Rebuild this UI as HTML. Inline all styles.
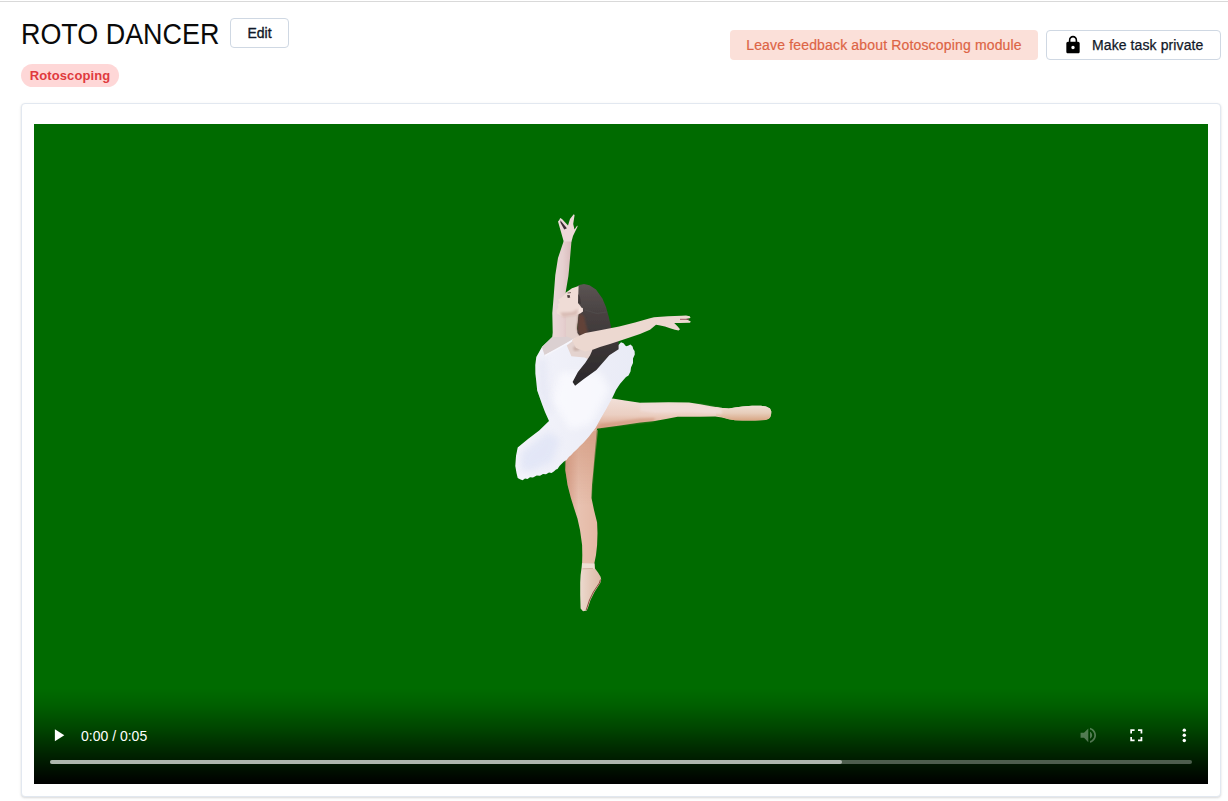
<!DOCTYPE html>
<html>
<head>
<meta charset="utf-8">
<title>ROTO DANCER</title>
<style>
*{box-sizing:border-box;margin:0;padding:0}
html,body{width:1228px;height:801px;overflow:hidden;background:#fff;font-family:"Liberation Sans",sans-serif;}
body{position:relative}
.topline{position:absolute;left:0;top:1px;width:1228px;height:1px;background:#d9d9d9}
.title{position:absolute;left:21px;top:14.5px;height:38px;line-height:38px;font-size:30px;color:#0a0a0a;white-space:nowrap;transform:scaleX(.897);transform-origin:0 0}
.btn{position:absolute;height:30px;border:1px solid #cfd8e3;border-radius:4px;background:#fff;color:#111827;font-size:14px;line-height:28px;text-align:center;white-space:nowrap}
.edit{left:230px;top:18px;width:59px;font-size:14px;-webkit-text-stroke:.35px #111827}
.badge{position:absolute;left:21px;top:64px;width:98px;height:23px;border-radius:12px;background:#fed7d7;color:#e03a3e;font-weight:bold;font-size:13px;line-height:24.700px;text-align:center;letter-spacing:0.1px}
.feedback{position:absolute;left:730px;top:30px;width:308px;height:30px;border-radius:4px;background:#fbe0d9;color:#dd6445;font-size:14px;letter-spacing:.16px;-webkit-text-stroke:.2px #dd6445;line-height:30px;text-align:center;white-space:nowrap}
.private{left:1046px;top:30px;width:175px;font-size:14px;letter-spacing:.1px;-webkit-text-stroke:.25px #111827}
.private svg{position:absolute;left:16px;top:4px;width:20px;height:20px}
.private span{position:absolute;left:45px;top:0;line-height:28px}
.card{position:absolute;left:21px;top:103px;width:1200px;height:694px;border:1px solid #e2e8f0;border-radius:4px;background:#fff;box-shadow:0 1px 3px rgba(0,0,0,.10),0 1px 2px rgba(0,0,0,.06)}
.video{position:absolute;left:34px;top:124px;width:1174px;height:660px;background:#006b00;overflow:hidden}
.grad{position:absolute;left:0;right:0;bottom:0;height:96px;background:linear-gradient(to bottom,rgba(0,0,0,0) 0%,rgba(0,0,0,.11) 18%,rgba(0,0,0,.36) 43%,rgba(0,0,0,.66) 68%,rgba(0,0,0,.89) 89%,rgba(0,0,0,1) 100%)}
.time{position:absolute;left:47px;top:603px;font-size:14px;line-height:18px;color:#fff;white-space:nowrap}
.bar{position:absolute;left:16px;top:636px;width:1142px;height:4px;border-radius:2px;background:rgba(255,255,255,.3)}
.bar i{position:absolute;left:0;top:0;height:4px;width:792px;border-radius:2px;background:rgba(255,255,255,.55)}
.ic{position:absolute;width:20.6px;height:20.6px;fill:#fff}
</style>
</head>
<body>
<div class="topline"></div>
<div class="title">ROTO DANCER</div>
<div class="btn edit">Edit</div>
<div class="badge">Rotoscoping</div>
<div class="feedback">Leave feedback about Rotoscoping module</div>
<div class="btn private">
<svg viewBox="0 0 24 24"><path fill="#000" d="M18 8h-1V6c0-2.76-2.24-5-5-5S7 3.240 7 6v2H6c-1.100 0-2 .9-2 2v10c0 1.100.9 2 2 2h12c1.100 0 2-.9 2-2V10c0-1.100-.9-2-2-2zm-6 9c-1.100 0-2-.9-2-2s.9-2 2-2 2 .9 2 2-.9 2-2 2zm3.100-9H8.900V6c0-1.710 1.390-3.100 3.100-3.100 1.710 0 3.100 1.390 3.100 3.100v2z"/></svg>
<span>Make task private</span>
</div>
<div class="card"></div>
<div class="video">
<!--DANCER-->
<svg class="dancer" viewBox="34 124 1174 660" width="1174" height="660" style="position:absolute;left:0;top:0">
<defs>
<filter id="bl" x="-5%" y="-5%" width="110%" height="110%"><feGaussianBlur stdDeviation="0.6"/></filter>
<filter id="bl3" x="-40%" y="-40%" width="180%" height="180%"><feGaussianBlur stdDeviation="3.5"/></filter>
<filter id="bl2" x="-20%" y="-20%" width="140%" height="140%"><feGaussianBlur stdDeviation="1.2"/></filter>
<linearGradient id="legx" x1="0" y1="0" x2="0" y2="1"><stop offset="0" stop-color="#f1dfd8"/><stop offset=".5" stop-color="#ebcfc2"/><stop offset="1" stop-color="#d7997c"/></linearGradient>
<linearGradient id="legs" x1="0" y1="0" x2="1" y2="0"><stop offset="0" stop-color="#d39a84"/><stop offset=".4" stop-color="#e8c2b1"/><stop offset="1" stop-color="#e4b8a4"/></linearGradient>
<linearGradient id="tutu" x1="0" y1="0" x2="1" y2="0"><stop offset="0" stop-color="#f4f4fb"/><stop offset=".5" stop-color="#eeeff8"/><stop offset="1" stop-color="#e9ebf6"/></linearGradient>
<linearGradient id="hair" x1="0" y1="0" x2="0" y2="1"><stop offset="0" stop-color="#5c5554"/><stop offset=".3" stop-color="#484141"/><stop offset=".6" stop-color="#3b3536"/><stop offset="1" stop-color="#2a282b"/></linearGradient>
<linearGradient id="arm1" x1="0" y1="0" x2="1" y2="0"><stop offset="0" stop-color="#e9d8d8"/><stop offset=".55" stop-color="#e6d0d0"/><stop offset="1" stop-color="#d9bcbc"/></linearGradient>
<linearGradient id="thsh" gradientUnits="userSpaceOnUse" x1="0" y1="440" x2="0" y2="505"><stop offset="0" stop-color="#d0957a" stop-opacity=".6"/><stop offset="1" stop-color="#d0957a" stop-opacity="0"/></linearGradient>
<linearGradient id="shoe1" x1="0" y1="0" x2="1" y2="0"><stop offset="0" stop-color="#ecd9ce"/><stop offset=".5" stop-color="#e4c9b9"/><stop offset="1" stop-color="#dcbba8"/></linearGradient>
<linearGradient id="shoe2" x1="0" y1="0" x2="0" y2="1"><stop offset="0" stop-color="#efe0d4"/><stop offset=".5" stop-color="#e7cdba"/><stop offset="1" stop-color="#d8a684"/></linearGradient>
<clipPath id="tclip"><path d="M552.5 336.8 L541.9 347 L536.3 357.100 L535.3 365 L535.4 373.8 L536.3 381.4 L537.2 390.4 L541.8 403.4 L545 412 L549 421 L539.2 430.4 L528 439 L517.7 447.5 L516 456 L515.3 465.9 L516.5 473 L517.7 478.100 L520 479.2 L522.6 480.3 L525 478.4 L527.5 479 L530 477.2 L533 477.6 L536.7 475.5 L540 475.8 L543 474 L546 474.3 L549 472.6 L551.500 473 L553.8 471.6 L556 469.6 L557.500 469 L559.500 466 L561.2 464.2 L564 461.6 L566.500 460 L569 456.8 L571 455.2 L573.4 452.4 L577 449.3 L580 446 L583 443.3 L585.7 440.2 L589 436.4 L592 432.5 L595.5 427.9 L601 418 L606.5 408.4 L612.6 397.3 L616 390 L620.100 383.8 L626 377 L628.500 375.500 L630.5 371.6 L631 367.500 L633 363 L633 358.500 L634.8 354.5 L634.6 351 L633.2 349 L632.6 346.4 L630.5 344.5 L628 345.8 L626 346.3 L623.500 343.2 L621 342.2 L619 344.500 L617 346 L600 350 L585.9 356.3 L577 337 L565 337 Z"/></clipPath>
</defs>
<g filter="url(#bl)">
<!-- standing leg -->
<path fill="url(#legs)" d="M572 438 L566 455 L565.3 470 L567.5 485 L570.9 498.100 L574 508 L577.5 518.7 L580 530 L582.100 544.9 L582.3 555 L582.100 563.6 L594.3 563.6 L596 555 L597.100 544.9 L597.5 533 L597.100 522.4 L594 510 L591.5 498.100 L592 485 L593.4 470 L595 450 L596.7 430.4 L598 424 Z"/>
<!-- pointe shoe -->
<path fill="url(#shoe1)" d="M582 563 L581.6 567.4 L580.6 575 L580.2 582.4 L580.2 595 L580.6 608.6 L583 611.2 L586.8 610.6 L588.2 607 L590.5 600 L594.5 592 L598 586.500 L600.3 583 L601.2 579.500 L600.6 576.7 L598 572.500 L595 568.500 L594.3 563 Z"/>
<path fill="none" stroke="#8a4c3c" stroke-width="1" d="M600.5 579.500 L599.4 583 L597 586.500 L593.4 592 L589.5 600 L587.2 607 L586.2 610"/>
<path fill="none" stroke="#eedfd3" stroke-width="5" d="M582 566.2 L594.5 566.2"/>
<path fill="none" stroke="#b98a78" stroke-width=".7" opacity=".7" d="M582.500 568.8 L593 568.4"/>
<!-- extended leg -->
<path fill="url(#legx)" d="M590 431 L600 402 L605 400 L612.6 398.6 L625 400.5 L640 402.8 L655 402.6 L668.5 402.2 L689 402.6 L700 404.2 L710.7 406.2 L720 407.8 L728.9 408.5 L735 407.6 L742.6 406.4 L752 405.7 L760.9 405.7 L766 406.5 L770 408.5 L771.3 411.5 L771.100 414.2 L770.3 417 L768.8 418.8 L765.4 419.9 L755 420.4 L742.6 420.5 L735 420.2 L728.9 419.3 L722 417.4 L715.2 416.4 L700 416.8 L677.6 416.8 L666 419 L654.8 421 L640 422.5 L620 425.500 L597.9 428.5 Z"/>
<path fill="url(#shoe2)" d="M716 407 L720 407.8 L728.9 408.5 L735 407.6 L742.6 406.4 L752 405.7 L760.9 405.7 L766 406.5 L770 408.5 L771.3 411.5 L771.100 414.2 L770.3 417 L768.8 418.8 L765.4 419.9 L755 420.4 L742.6 420.5 L735 420.2 L728.9 419.3 L722 417 L716 415.4 Z"/>
<path fill="#f1dfdb" opacity=".75" filter="url(#bl2)" d="M640 404 L700 405 L722 409 L722 414 L690 412.500 L655 413 L640 411 Z"/>
<path fill="#cf9478" opacity=".55" filter="url(#bl2)" d="M600 424 L640 418.500 L655 418 L654 421 L620 425 L598 428 Z"/>
<!-- thigh shade -->
<path fill="url(#thsh)" d="M564 440 L598 430 L594 470 L592 505 L572 505 L565 470 Z"/>
<!-- tutu + torso -->
<path fill="url(#tutu)" d="M552.5 336.8 L541.9 347 L536.3 357.100 L535.3 365 L535.4 373.8 L536.3 381.4 L537.2 390.4 L541.8 403.4 L545 412 L549 421 L539.2 430.4 L528 439 L517.7 447.5 L516 456 L515.3 465.9 L516.5 473 L517.7 478.100 L520 479.2 L522.6 480.3 L525 478.4 L527.5 479 L530 477.2 L533 477.6 L536.7 475.5 L540 475.8 L543 474 L546 474.3 L549 472.6 L551.500 473 L553.8 471.6 L556 469.6 L557.500 469 L559.500 466 L561.2 464.2 L564 461.6 L566.500 460 L569 456.8 L571 455.2 L573.4 452.4 L577 449.3 L580 446 L583 443.3 L585.7 440.2 L589 436.4 L592 432.5 L595.5 427.9 L601 418 L606.5 408.4 L612.6 397.3 L616 390 L620.100 383.8 L626 377 L628.500 375.500 L630.5 371.6 L631 367.500 L633 363 L633 358.500 L634.8 354.5 L634.6 351 L633.2 349 L632.6 346.4 L630.5 344.5 L628 345.8 L626 346.3 L623.500 343.2 L621 342.2 L619 344.500 L617 346 L600 350 L585.9 356.3 L577 337 L565 337 Z"/>
<g clip-path="url(#tclip)">
<path fill="#dde2f5" opacity=".7" filter="url(#bl3)" d="M521 452 L548 432 L560 440 L552 462 L530 472 L520 470 Z"/>
<path fill="#fcfcff" opacity=".7" filter="url(#bl3)" d="M560 372 L600 372 L610 390 L590 425 L570 430 L552 400 Z"/>
<path fill="#e0e3f3" opacity=".6" filter="url(#bl3)" d="M538 360 L546 358 L548 395 L552 412 L546 412 L538 390 Z"/>
</g>
<!-- chest (shaded) -->
<path fill="#dbd0d1" d="M553 333 L552.5 336.8 L541.9 347 L544.6 355.3 L556 349.5 L565 344.2 L576 337.7 L578 331 L562 330 Z"/>
<!-- strap highlight -->
<path fill="none" stroke="#f6f6fc" stroke-width="1.6" d="M545 355.6 L565.4 344.4 L576.5 338"/>
<!-- armpit skin -->
<path fill="#e4d3cf" d="M566.8 345.5 L571.4 356.2 L584.4 357.6 L588 359 L594 354.500 L597 348.5 L590 340 L576 338.5 Z"/>
<path fill="#c9b0a8" filter="url(#bl2)" d="M573 347 L580 346 L579 350.5 L574 351 Z"/>
<!-- neck -->
<path fill="#e3d1cc" d="M562.8 316 L561.5 324 L560.5 334 L572 338.500 L582 338.500 L579 333 L577.2 328.7 L579.3 313 Z"/>
<!-- hair -->
<path fill="url(#hair)" d="M576.5 288 L578.3 285.2 L584 284 L589.5 285.2 L596 289.5 L602.4 298.5 L606 307 L608.7 316.500 L611.3 328 L612.5 334 L618.6 340.6 L618.6 349.2 L609.3 355.3 L596.4 370 L583.5 379.3 L575.100 385.8 L572.6 382 L577.9 371.9 L585.3 362.7 L590 355.500 L592.3 350.3 L586 342 L580.500 337 L577.5 333 L577.2 328.7 L578.6 314 L577 304.6 Z"/>
<path fill="#6a4538" opacity=".8" filter="url(#bl2)" d="M579 313 L584 316 L588 333 L580 336 L577.2 329 Z"/>
<path fill="none" stroke="#55504f" stroke-width="1" opacity=".6" d="M585 310 L597 313.500 L606.500 312"/>
<!-- raised arm -->
<path fill="url(#arm1)" d="M563.7 241 L558 258 L555.3 275 L553.7 296 L552.3 313 L552.7 332 L552.5 337 L566 337 L566 300 L565.7 292 L568.4 276 L569 270 L571.5 241 Z"/>
<!-- raised hand -->
<path fill="#ecd8d8" d="M563.7 241.5 L561 232 L558 221.6 L559.3 220 L560.2 218.100 L562 219 L568 225.5 L570 219 L573.7 214.2 L574.6 215 L573.2 224 L574.5 229.5 L577.2 225.5 L577.6 226.6 L573 236 L571.5 241.5 Z"/>
<path fill="#3a2a33" d="M560.3 220.2 L566.9 228.2 L564.3 229.4 L560.5 222.8 Z"/>
<!-- face -->
<path fill="#efdcd6" d="M578.6 285.9 L572 288.2 L566 292.5 L564.4 294.8 L561.5 297.6 L558.100 299.6 L559.6 302.6 L557.6 304.6 L558.4 307 L556.6 310.4 L557 313.4 L562.8 316.7 L574.4 315.4 L579.3 314 L582.8 310.6 L580.5 306 L578 303 L578.3 295 Z"/>
<path fill="#d9bdb6" filter="url(#bl2)" d="M560 312.5 L572 312 L578 309 L577 315 L563 317.5 Z"/>
<path fill="#4a3c3a" d="M567 295.2 L569.6 295 L570.2 297.6 L567.8 298 Z"/>
<path fill="none" stroke="#5a4a46" stroke-width=".8" d="M567.6 293 L571 292.6"/>
<path fill="#3a3334" opacity=".75" d="M578.2 294 L580 297 L581 304 L578.2 303 Z"/>
<path fill="#f3e2dc" d="M579.5 307.2 L582.8 308 L583 311.4 L580.2 313.6 L578.6 311 Z"/>
<!-- extended arm -->
<path fill="#ecd8d0" d="M572 340 L576 337.2 L585.3 333.100 L600 330.3 L619.2 326.6 L635 322.5 L650 318.3 L654 317.3 L668 316.3 L681.4 315.7 L686 315.4 L689.8 316.2 L690.5 318 L686 319 L690.8 321.5 L690 322.8 L680 322.9 L674.2 323 L677.500 326.3 L680 329.3 L678.6 330.4 L675 329.8 L670 328.2 L665 326.6 L659 325.3 L656 324.8 L650 329.8 L640 334 L624.4 339.2 L610 344 L600 347 L592.7 349.7 L585 351.5 L576 348 Z"/>
<path fill="none" stroke="#8a4a52" stroke-width=".9" d="M680 319.3 L689 319.3"/>
</g>
</svg>
<!--/DANCER-->
<div class="grad"></div>
<svg class="ic" style="left:13.7px;top:601.4px" viewBox="0 0 24 24"><path d="M8 5v14l11-7z"/></svg>
<div class="time">0:00 / 0:05</div>
<svg class="ic" style="left:1043.7px;top:601.4px;opacity:.32" viewBox="0 0 24 24"><path d="M3 9v6h4l5 5V4L7 9H3zm13.500 3c0-1.770-1.020-3.290-2.500-4.030v8.050c1.480-.73 2.500-2.250 2.500-4.020zM14 3.230v2.060c2.890.86 5 3.540 5 6.710s-2.110 5.850-5 6.710v2.060c4.010-.91 7-4.490 7-8.770s-2.990-7.860-7-8.770z"/></svg>
<svg class="ic" style="left:1091.7px;top:601.4px" viewBox="0 0 24 24"><path d="M7 14H5v5h5v-2H7v-3zm-2-4h2V7h3V5H5v5zm12 7h-3v2h5v-5h-2v3zM14 5v2h3v3h2V5h-5z"/></svg>
<svg class="ic" style="left:1139.700px;top:601.4px" viewBox="0 0 24 24"><circle cx="12" cy="6" r="2"/><circle cx="12" cy="12" r="2"/><circle cx="12" cy="18" r="2"/></svg>
<div class="bar"><i></i></div>
</div>
</body>
</html>
